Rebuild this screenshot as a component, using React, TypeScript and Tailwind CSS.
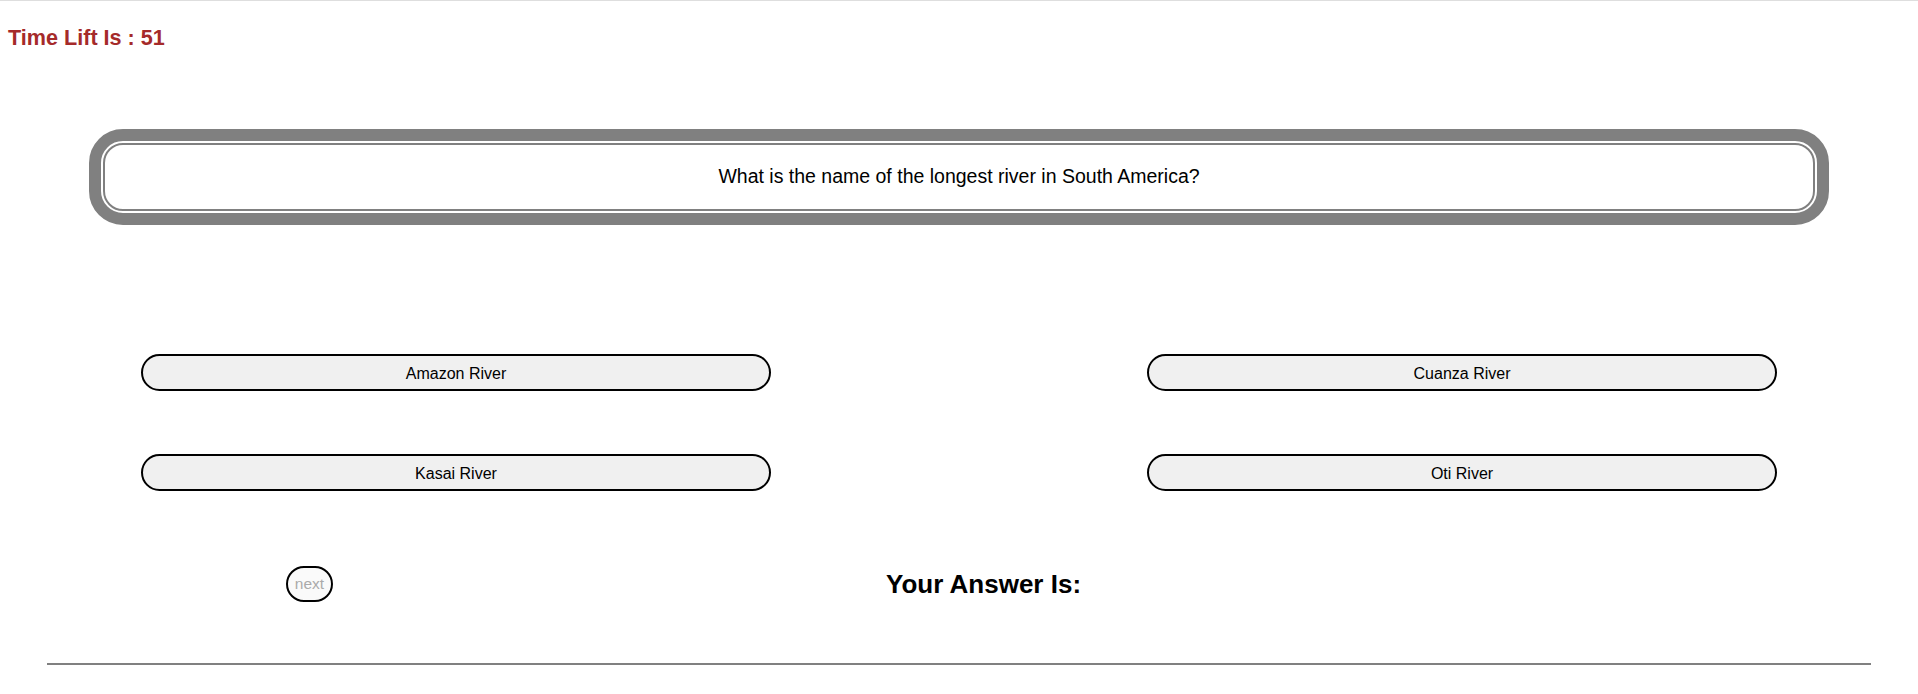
import React, { useState } from 'react';

const answers = ['Amazon River', 'Cuanza River', 'Kasai River', 'Oti River'];

const App = () => {
  const [selected, setSelected] = useState<string | null>(null);

  return (
    <div className="min-h-screen bg-white border-t border-[#dedede] font-['Liberation_Sans',Arial,sans-serif] text-black">
      <h2 className="pl-2 pt-[25px] text-[21.6px] leading-[24px] font-bold text-[#a52a2a]">Time Lift Is : 51</h2>

      {/* question */}
      <div className="mx-[89px] mt-[79px] border-[12px] border-[#808080] rounded-[34px] p-[2px]">
        <div className="h-[68px] border-2 border-[#808080] rounded-[20px] flex items-center justify-center text-[19.5px]">
          What is the name of the longest river in South America?
        </div>
      </div>

      {/* answers */}
      <div className="mt-[129px] px-[141px] grid grid-cols-[630px_630px] justify-between gap-y-[63px]">
        {answers.map((a) => (
          <button
            key={a}
            onClick={() => setSelected(a)}
            className="h-[37px] w-[630px] pt-[3px] border-2 border-black rounded-full bg-[#f0f0f0] text-[16px] text-black"
          >
            {a}
          </button>
        ))}
      </div>

      <div className="mt-[75px] h-[36px] flex items-center pl-[286px]">
        <button className="h-[36px] w-[47px] border-2 border-black rounded-full bg-[#fafafa] text-[15.5px] text-[#aaaaaa]">
          next
        </button>
        <h2 className="ml-[553px] text-[26px] font-bold leading-[36px]">Your Answer Is:{selected ? ' ' + selected : ''}</h2>
      </div>

      <hr className="mx-[47px] mt-[61px] border-0 border-t-2 border-[#808080]" />
    </div>
  );
};

export default App;
